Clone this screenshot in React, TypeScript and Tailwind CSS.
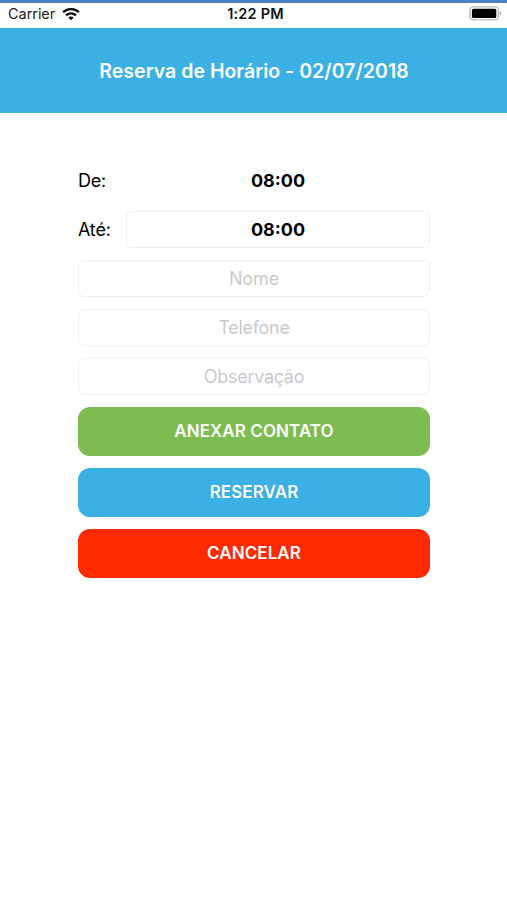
import React from "react";

const fieldBase =
  "block h-[37px] min-w-0 rounded-[6px] border border-[#efefef] bg-white text-center text-[18px] text-black outline-none placeholder:text-[#c9c9cd] placeholder:opacity-100";

const buttonBase =
  "h-[49px] rounded-[12px] text-[17px] font-semibold tracking-[0.08px] text-white";

function WifiIcon() {
  return (
    <svg width="18" height="13" viewBox="0 0 18 13" fill="none" stroke="#111" strokeWidth="2.5">
      <path d="M1.1 4.2C5.6 0 12.4 0 16.9 4.2" />
      <path d="M4 7.4C6.9 4.7 11.1 4.7 14 7.4" />
      <path d="M9 12.2 6.3 9.5C7.8 8.1 10.2 8.1 11.7 9.5Z" fill="#111" stroke="none" />
    </svg>
  );
}

function BatteryIcon() {
  return (
    <svg width="33" height="15" viewBox="0 0 33 15">
      <rect x="0.9" y="0.9" width="28.6" height="13" rx="3.6" fill="#fff" stroke="#b8b8b8" strokeWidth="1.4" />
      <rect x="2.9" y="2.8" width="24.4" height="9.2" rx="1.6" fill="#000" />
      <path d="M30.8 5.2c1.6.7 1.6 3.7 0 4.4Z" fill="#999" />
    </svg>
  );
}

function StatusBar() {
  return (
    <div className="grid h-[28px] grid-cols-3 items-center border-t-[3px] border-[#4a82c7] bg-white pl-[8px] pr-[5px] text-[14.5px] leading-none text-[#222]">
      <div className="flex items-center gap-[7px] pb-[3px]">
        <span className="tracking-[-0.05px]">Carrier</span>
        <WifiIcon />
      </div>
      <span className="pb-[3px] pl-[1px] text-center font-semibold tracking-[0.2px] text-[#111]">1:22 PM</span>
      <div className="flex justify-end pb-[5px]">
        <BatteryIcon />
      </div>
    </div>
  );
}

export default function App() {
  return (
    <div className="flex min-h-[900px] flex-col bg-white font-[Inter,'Liberation_Sans',sans-serif]">
      <StatusBar />
      <header className="flex h-[85px] justify-center bg-[#3ab0e4] pt-[28px]">
        <h1 className="whitespace-nowrap pl-[1px] text-[19.5px] font-semibold leading-[30px] tracking-[0.03px] text-white">
          Reserva de Horário - 02/07/2018
        </h1>
      </header>
      <main className="mx-[77px] mt-[49px] flex flex-col gap-[12px] pl-px">
        <div className="flex h-[37px] items-center text-[18px]">
          <span className="w-[48px] tracking-[-0.3px]">De:</span>
          <span className="flex-1 text-center font-bold">08:00</span>
        </div>
        <div className="flex items-center text-[18px]">
          <label htmlFor="ate" className="w-[48px] tracking-[-0.2px]">Até:</label>
          <input id="ate" defaultValue="08:00" className={`${fieldBase} flex-1 font-bold`} />
        </div>
        <input placeholder="Nome" className={`${fieldBase} tracking-[-0.1px]`} />
        <input placeholder="Telefone" className={`${fieldBase} tracking-[-0.3px]`} />
        <input placeholder="Observação" className={`${fieldBase} tracking-[-0.3px]`} />
        <button className={`${buttonBase} bg-[#7dbc51]`}>ANEXAR CONTATO</button>
        <button className={`${buttonBase} bg-[#3ab0e4]`}>RESERVAR</button>
        <button className={`${buttonBase} bg-[#ff2a00]`}>CANCELAR</button>
      </main>
    </div>
  );
}
